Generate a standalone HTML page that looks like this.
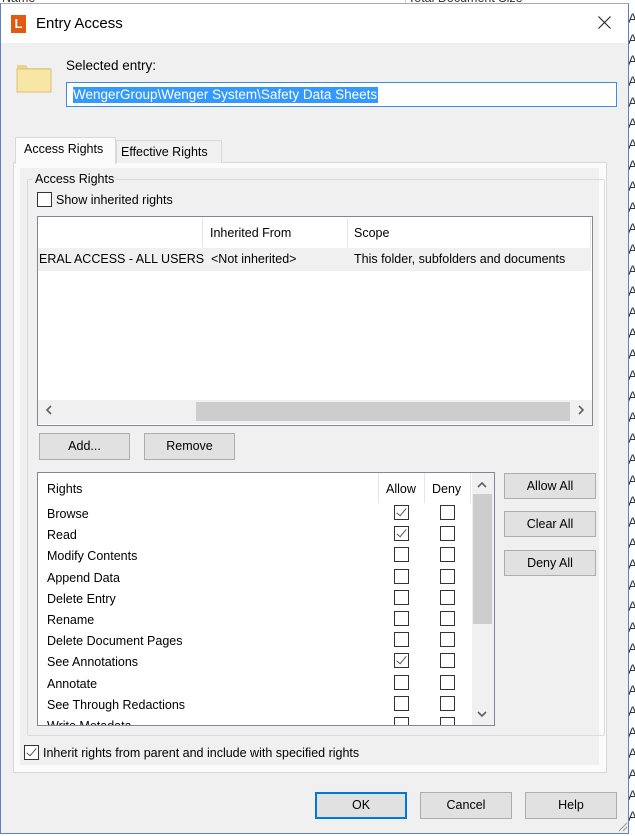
<!DOCTYPE html>
<html><head><meta charset="utf-8"><style>
*{box-sizing:border-box;margin:0;padding:0}
body{width:635px;height:836px;background:#fff;position:relative;overflow:hidden;font-family:"Liberation Sans",sans-serif;font-size:12.5px;color:#000}
.a{position:absolute}
.btn{position:absolute;background:#e1e1e1;border:1px solid #adadad;text-align:center;line-height:24px;font-size:12.5px}
.cb{position:absolute;width:15px;height:15px;border:1px solid #333;background:#fff}
.ck::after{content:"";position:absolute;left:4px;top:0px;width:4px;height:9px;border-right:1.5px solid #555;border-bottom:1.5px solid #555;transform:rotate(40deg)}
.t{position:absolute;white-space:nowrap}
</style></head><body>
<div class="t" style="left:2px;top:-9px;color:#333">Name</div>
<div class="t" style="left:408px;top:-9px;color:#333">Total Document Size</div>
<div class="a" style="left:405px;top:0;width:1px;height:4px;background:#ccc"></div>
<div class="a" style="left:629px;top:0;width:6px;height:836px;overflow:hidden">
<div style="line-height:21px;font-size:14px;color:#333;margin-left:-1px;padding-top:8px">A<br>A<br>A<br>A<br>A<br>A<br>A<br>A<br>A<br>A<br>A<br>A<br>A<br>A<br>A<br>A<br>A<br>A<br>A<br>A<br>A<br>A<br>A<br>A<br>A<br>A<br>A<br>A<br>A<br>A<br>A<br>A<br>A<br>A<br>A<br>A<br>A<br>A<br>A</div></div>
<div class="a" style="left:0;top:3px;width:629px;height:831px;background:#f0f0f0;border:1px solid #5d82c0;border-top-color:#aaa"></div>
<div class="a" style="left:1px;top:4px;width:627px;height:39px;background:#fff"></div>
<div class="a" style="left:11px;top:15px;width:15px;height:18px;background:#e05a10;color:#fff;font-weight:bold;font-size:13px;text-align:center;line-height:18px">L</div>
<div class="t" style="left:36px;top:15px;font-size:15px">Entry Access</div>
<svg class="a" style="left:598px;top:16px" width="13" height="13"><path d="M0.5 0.5L12.5 12.5M12.5 0.5L0.5 12.5" stroke="#222" stroke-width="1.1"/></svg>
<svg class="a" style="left:16px;top:61px" width="36" height="32"><path d="M1 4h9l2 3h22v23H1z" fill="#e8d58a"/><rect x="1" y="8" width="34" height="23" fill="#f8e7a4" stroke="#d9c277"/></svg>
<div class="t" style="left:66px;top:58px;font-size:13.5px">Selected entry:</div>
<div class="a" style="left:66px;top:82px;width:551px;height:25px;background:#fff;border:1px solid #3c8ee0"></div>
<div class="t" style="left:73px;top:87px;height:16px;background:#3399ff;color:#fff;font-size:13.5px;line-height:16px;padding-right:1px">WengerGroup\Wenger System\Safety Data Sheets</div>
<div class="a" style="left:13px;top:162px;width:594px;height:611px;background:#fbfbfb;border:1px solid #d9d9d9"></div>
<div class="a" style="left:20px;top:168px;width:579px;height:597px;background:#f0f0f0"></div>
<div class="a" style="left:116px;top:140px;width:106px;height:23px;background:#f0f0f0;border:1px solid #d9d9d9;border-bottom:none"></div>
<div class="t" style="left:121px;top:145px">Effective Rights</div>
<div class="a" style="left:15px;top:137px;width:101px;height:27px;background:#fbfbfb;border:1px solid #d9d9d9;border-bottom:none"></div>
<div class="t" style="left:24px;top:142px">Access Rights</div>
<div class="a" style="left:27px;top:179px;width:578px;height:557px;border:1px solid #dcdcdc;border-radius:2px"></div>
<div class="t" style="left:33px;top:172px;background:#f0f0f0;padding:0 2px">Access Rights</div>
<div class="cb" style="left:37px;top:192px"></div>
<div class="t" style="left:56px;top:193px">Show inherited rights</div>
<div class="a" style="left:37px;top:216px;width:556px;height:210px;background:#fff;border:1px solid #828790"></div>
<div class="a" style="left:202px;top:218px;width:1px;height:29px;background:#e5e5e5"></div>
<div class="a" style="left:347px;top:218px;width:1px;height:29px;background:#e5e5e5"></div>
<div class="a" style="left:590px;top:218px;width:1px;height:29px;background:#e5e5e5"></div>
<div class="t" style="left:210px;top:226px">Inherited From</div>
<div class="t" style="left:354px;top:226px">Scope</div>
<div class="a" style="left:38px;top:248px;width:553px;height:23px;background:#f0f0f0"></div>
<div class="t" style="left:39px;top:252px">ERAL ACCESS - ALL USERS</div>
<div class="t" style="left:211px;top:252px">&lt;Not inherited&gt;</div>
<div class="t" style="left:354px;top:252px">This folder, subfolders and documents</div>
<div class="a" style="left:38px;top:400px;width:554px;height:24px;background:#f0f0f0"></div>
<div class="a" style="left:196px;top:402px;width:374px;height:19px;background:#cdcdcd"></div>
<svg class="a" style="left:45px;top:405px" width="8" height="10"><path d="M6 1L2 5L6 9" fill="none" stroke="#606060" stroke-width="1.6"/></svg>
<svg class="a" style="left:577px;top:405px" width="8" height="10"><path d="M2 1L6 5L2 9" fill="none" stroke="#606060" stroke-width="1.6"/></svg>
<div class="btn" style="left:39px;top:433px;width:91px;height:27px">Add...</div>
<div class="btn" style="left:144px;top:433px;width:91px;height:27px">Remove</div>
<div class="a" style="left:37px;top:472px;width:458px;height:254px;background:#fff;border:1px solid #828790;overflow:hidden">
<div class="a" style="left:340px;top:0;width:1px;height:30px;background:#e5e5e5"></div>
<div class="a" style="left:386px;top:0;width:1px;height:30px;background:#e5e5e5"></div>
<div class="a" style="left:432px;top:0;width:1px;height:30px;background:#e5e5e5"></div>
<div class="t" style="left:9px;top:9px">Rights</div>
<div class="t" style="left:348px;top:9px">Allow</div>
<div class="t" style="left:394px;top:9px">Deny</div>
<div class="a" style="left:434px;top:0;width:22px;height:252px;background:#f0f0f0"></div>
<div class="a" style="left:435px;top:21px;width:19px;height:130px;background:#cdcdcd"></div>
<svg class="a" style="left:439px;top:8px" width="10" height="7"><path d="M1 6L5 2L9 6" fill="none" stroke="#606060" stroke-width="1.6"/></svg>
<svg class="a" style="left:439px;top:238px" width="10" height="7"><path d="M1 1L5 5L9 1" fill="none" stroke="#606060" stroke-width="1.6"/></svg>
</div>
<div class="a" style="left:38px;top:503px;width:433px;height:222px;overflow:hidden">
<div class="t" style="left:9px;top:4px">Browse</div><div class="cb ck" style="left:356px;top:2px"></div><div class="cb" style="left:402px;top:2px"></div>
<div class="t" style="left:9px;top:25px">Read</div><div class="cb ck" style="left:356px;top:23px"></div><div class="cb" style="left:402px;top:23px"></div>
<div class="t" style="left:9px;top:46px">Modify Contents</div><div class="cb" style="left:356px;top:44px"></div><div class="cb" style="left:402px;top:44px"></div>
<div class="t" style="left:9px;top:68px">Append Data</div><div class="cb" style="left:356px;top:66px"></div><div class="cb" style="left:402px;top:66px"></div>
<div class="t" style="left:9px;top:89px">Delete Entry</div><div class="cb" style="left:356px;top:87px"></div><div class="cb" style="left:402px;top:87px"></div>
<div class="t" style="left:9px;top:110px">Rename</div><div class="cb" style="left:356px;top:108px"></div><div class="cb" style="left:402px;top:108px"></div>
<div class="t" style="left:9px;top:131px">Delete Document Pages</div><div class="cb" style="left:356px;top:129px"></div><div class="cb" style="left:402px;top:129px"></div>
<div class="t" style="left:9px;top:152px">See Annotations</div><div class="cb ck" style="left:356px;top:150px"></div><div class="cb" style="left:402px;top:150px"></div>
<div class="t" style="left:9px;top:174px">Annotate</div><div class="cb" style="left:356px;top:172px"></div><div class="cb" style="left:402px;top:172px"></div>
<div class="t" style="left:9px;top:195px">See Through Redactions</div><div class="cb" style="left:356px;top:193px"></div><div class="cb" style="left:402px;top:193px"></div>
<div class="t" style="left:9px;top:216px">Write Metadata</div><div class="cb" style="left:356px;top:214px"></div><div class="cb" style="left:402px;top:214px"></div>
</div>
<div class="btn" style="left:504px;top:473px;width:92px;height:26px">Allow All</div>
<div class="btn" style="left:504px;top:511px;width:92px;height:26px">Clear All</div>
<div class="btn" style="left:504px;top:550px;width:92px;height:26px">Deny All</div>
<div class="cb ck" style="left:24px;top:745px"></div>
<div class="t" style="left:43px;top:746px">Inherit rights from parent and include with specified rights</div>
<div class="btn" style="left:315px;top:792px;width:92px;height:27px;border:2px solid #0078d7;line-height:23px">OK</div>
<div class="btn" style="left:420px;top:792px;width:92px;height:27px">Cancel</div>
<div class="btn" style="left:525px;top:792px;width:92px;height:27px">Help</div>
<svg class="a" style="left:616px;top:820px" width="12" height="12"><path d="M11 3L3 11M11 7L7 11" stroke="#999" stroke-width="1"/></svg>
</body></html>
